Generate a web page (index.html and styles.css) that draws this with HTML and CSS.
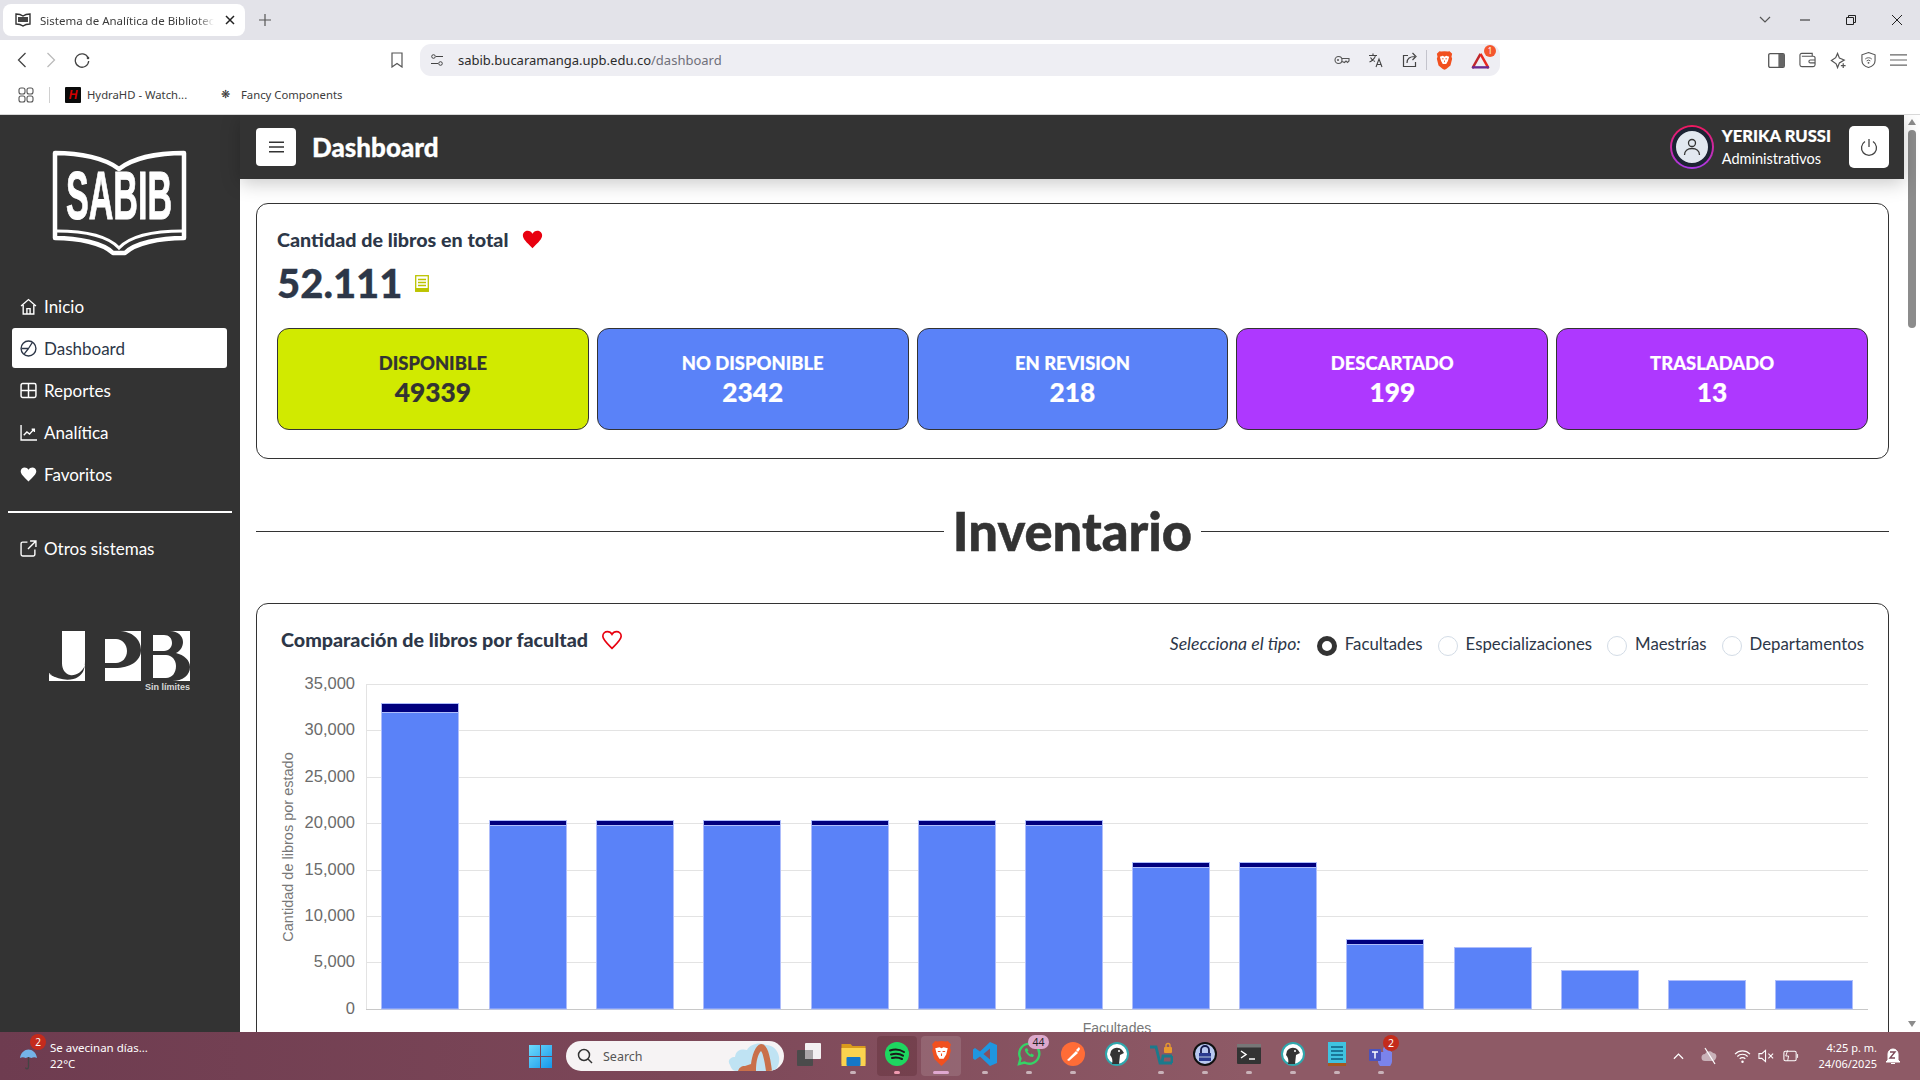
FILE: index.html
```html
<!DOCTYPE html>
<html lang="es">
<head>
  <meta charset="UTF-8" />
  <meta name="viewport" content="width=device-width, initial-scale=1.0" />
  <title>Sistema de Analítica de Bibliotecas</title>
  <link rel="stylesheet" href="styles.css">
</head>
<body>
  <svg class="defs" width="0" height="0">
    <symbol id="bear" viewBox="0 0 24 24">
      <circle cx="12" cy="12" r="11" fill="#fff" stroke="#2fa7ad" stroke-width="2"/>
      <path d="M6 9c3-4 8-4 11-1l2 3-4 2-1 9H7c1-4 0-7-2-9z" fill="#333"/>
      <circle cx="14" cy="9" r="1" fill="#fff"/>
    </symbol>
    <symbol id="heart" viewBox="0 0 24 24">
      <path d="M12 22C5 15 1 11.500 1 7.500 1 4 3.700 2 6.500 2 8.800 2 10.800 3.200 12 5.300 13.200 3.200 15.200 2 17.500 2 20.300 2 23 4 23 7.500 23 11.500 19 15 12 22z"/>
    </symbol>
  </svg>

  <!-- barra del navegador -->
  <div class="tabstrip">
    <div class="tab">
      <svg class="tab-icon" viewBox="0 0 16 14" width="16" height="14"><path d="M1 1c3 0 5 .5 7 2 2-1.500 4-2 7-2v10c-3 0-5 .5-7 2-2-1.500-4-2-7-2z" fill="#fff" stroke="#333" stroke-width="1.400"/><rect x="3" y="4" width="10" height="5" fill="#444"/></svg>
      <span class="tab-title">Sistema de Analítica de Bibliotecas</span>
      <svg class="tab-close" viewBox="0 0 10 10" width="10" height="10"><path d="M1 1l8 8M9 1l-8 8" stroke="#222" stroke-width="1.500"/></svg>
    </div>
    <svg class="tab-new" viewBox="0 0 12 12" width="12" height="12"><path d="M6 0v12M0 6h12" stroke="#555" stroke-width="1.200"/></svg>
    <div class="win-controls">
      <svg class="win-chevron" viewBox="0 0 12 8" width="12" height="8"><path d="M1 1l5 5 5-5" fill="none" stroke="#555" stroke-width="1.200"/></svg>
      <svg viewBox="0 0 12 2" width="12" height="2"><path d="M1 1h10" stroke="#222"/></svg>
      <svg viewBox="0 0 12 12" width="12" height="12"><path d="M1.500 3.500h7v7h-7zM3.500 3.500v-2h7v7h-2" fill="none" stroke="#222"/></svg>
      <svg viewBox="0 0 12 12" width="12" height="12"><path d="M1 1l10 10M11 1L1 11" stroke="#222"/></svg>
    </div>
  </div>

  <div class="toolbar">
    <svg class="tb-back" viewBox="0 0 10 16" width="10" height="16"><path d="M8.500 1L1.500 8l7 7" fill="none" stroke="#444" stroke-width="1.300"/></svg>
    <svg class="tb-forward" viewBox="0 0 10 16" width="10" height="16"><path d="M1.500 1l7 7-7 7" fill="none" stroke="#bbb" stroke-width="1.300"/></svg>
    <svg class="tb-reload" viewBox="0 0 16 16" width="16" height="16"><path d="M14 5.500A6.700 6.700 0 1 0 14.700 9" fill="none" stroke="#444" stroke-width="1.300"/><circle cx="14" cy="6" r="1.300" fill="#444"/></svg>
    <svg class="tb-bookmark" viewBox="0 0 12 16" width="12" height="16"><path d="M1 1h10v14l-5-3.500L1 15z" fill="none" stroke="#555" stroke-width="1.200"/></svg>
    <div class="address">
      <svg class="addr-tune" viewBox="0 0 14 12" width="14" height="12"><g fill="none" stroke="#444"><circle cx="3.500" cy="2.500" r="1.800"/><path d="M6 2.500h7M1 9.500h7"/><circle cx="10.500" cy="9.500" r="1.800"/></g></svg>
      <span class="addr-url">sabib.bucaramanga.upb.edu.co<span class="addr-path">/dashboard</span></span>
      <div class="addr-icons">
        <svg viewBox="0 0 16 10" width="16" height="10"><g fill="none" stroke="#555" stroke-width="1.100"><circle cx="4.500" cy="5" r="3.500"/><path d="M8 3.500h7v2.500l-1.500 1.500-1.500-1.500-1.500 1.500L8 6.500"/></g><circle cx="4" cy="5" r="1" fill="#555"/></svg>
        <svg viewBox="0 0 16 16" width="16" height="16"><g fill="none" stroke="#444" stroke-width="1.100"><path d="M1 3.500h8M5 1.500v2M7.500 3.500C7 6 4 9 1.500 10M2.500 5.500C3.500 7.500 5.500 9 7 9.500M8 15l3-8 3 8M9.100 12.500h3.800"/></g></svg>
        <svg viewBox="0 0 16 16" width="16" height="16"><g fill="none" stroke="#444" stroke-width="1.200"><path d="M6 3.500H1.500v11h12V10M5 11C5 6.500 8 4.500 13 4.500M10.500 1l3.500 3.500L10.500 8"/></g></svg>
        <span class="addr-sep"></span>
        <svg class="addr-brave" viewBox="0 0 20 24" width="17" height="21"><path d="M10 1l4 .5 2-.5 3 3-.8 3.500.8 2.500-2 8-5 4-2 1-2-1-5-4-2-8 .8-2.500L1 4l3-3 2 .5z" fill="#f1501f"/><path d="M4.500 7.500L8 6.500l2 1 2-1 3.500 1-1.500 5-2 3.500h-4l-2-3.500z" fill="#fff"/><path d="M7 10h2M11 10h2M10 12v2" stroke="#f1501f"/></svg>
        <span class="addr-rewards">
          <svg viewBox="0 0 20 18" width="19" height="17"><path d="M10 2l-8.500 15" stroke="#c0262a" stroke-width="2.600"/><path d="M10 2l8.500 15" stroke="#e8281f" stroke-width="2.600"/><path d="M1 15h18v2.500H1z" fill="#6a2b92"/></svg>
          <span class="addr-badge">1</span>
        </span>
      </div>
    </div>
    <div class="tb-right">
      <svg viewBox="0 0 18 16" width="17" height="15"><rect x=".7" y=".7" width="16.600" height="14.600" rx="1.500" fill="none" stroke="#555" stroke-width="1.400"/><rect x="11" y="1" width="6" height="14" fill="#666"/></svg>
      <svg viewBox="0 0 18 16" width="17" height="16"><path d="M3 1h11v3M1 3a2 2 0 0 1 2-2M1 3v10a2 2 0 0 0 2 2h12a2 2 0 0 0 2-2V6a2 2 0 0 0-2-2H3" fill="none" stroke="#555" stroke-width="1.200"/><path d="M17 8h-5a1.500 1.500 0 0 0 0 3h5" fill="none" stroke="#555" stroke-width="1.200"/></svg>
      <svg viewBox="0 0 18 18" width="17" height="17"><path d="M8 1.500l2 5 5 2-5 3-2 5-1.500-4L1.500 9l4.500-3z" fill="none" stroke="#555" stroke-width="1.300"/><path d="M14 12v5M11.500 14.500h5" stroke="#555" stroke-width="1.300"/></svg>
      <svg viewBox="0 0 16 18" width="15" height="18"><path d="M8 1l7 2.500v6c0 4-3.500 6.500-7 7.500-3.500-1-7-3.500-7-7.500v-6z" fill="none" stroke="#555" stroke-width="1.200"/><path d="M4.500 8a5 5 0 0 1 7 0M6 10a3 3 0 0 1 4 0" fill="none" stroke="#555"/><circle cx="8" cy="12" r="1" fill="#555"/></svg>
      <svg viewBox="0 0 18 14" width="17" height="14"><path d="M0 1.500h18M0 7h18M0 12.500h18" stroke="#666" stroke-width="1.300"/></svg>
    </div>
  </div>

  <div class="bookmarks">
    <svg class="bm-apps" viewBox="0 0 16 16" width="16" height="16"><g fill="none" stroke="#555" stroke-width="1.100"><rect x="1" y="1" width="6" height="6" rx="2"/><rect x="9" y="1" width="6" height="6" rx="2"/><rect x="1" y="9" width="6" height="6" rx="2"/><rect x="9" y="9" width="6" height="6" rx="2"/></g></svg>
    <span class="bm-sep"></span>
    <span class="bm-hydra">H</span>
    <span class="bm-text bm-first">HydraHD - Watch...</span>
    <span class="bm-flower">❋</span>
    <span class="bm-text">Fancy Components</span>
  </div>

  <!-- aplicacion -->
  <div class="app">
    <aside class="sidebar">
      <div class="logo">
        <svg viewBox="50 148 140 112" width="140" height="112">
          <path d="M55 153C80 153 105 158 119 169 133 158 158 153 184 153V238C160 238 135 243 125 253H113C103 243 78 238 55 238Z" fill="none" stroke="#fff" stroke-width="4.500" stroke-linejoin="round"/>
          <path d="M56 231C85 231 108 236 119 248 130 236 153 231 183 231" fill="none" stroke="#fff" stroke-width="3"/>
          <text class="logo-text" x="119" y="219" text-anchor="middle" textLength="106" lengthAdjust="spacingAndGlyphs">SABIB</text>
        </svg>
      </div>
      <nav class="nav">
        <a class="nav-item">
          <svg viewBox="0 0 16 16" width="17" height="17"><path d="M1 7.500L8 1.500l7 6M3 6.500V15h10V6.500M6.500 15v-5h3v5" fill="none" stroke="currentColor" stroke-width="1.300"/></svg>
          Inicio
        </a>
        <a class="nav-item active">
          <svg viewBox="0 0 16 16" width="17" height="17"><circle cx="8" cy="8" r="7" fill="none" stroke="currentColor" stroke-width="1.300"/><path d="M8 8l3.500-5.500M8 8H1.500M8 8l-4 5" fill="none" stroke="currentColor" stroke-width="1.200"/></svg>
          Dashboard
        </a>
        <a class="nav-item">
          <svg viewBox="0 0 16 16" width="17" height="17"><rect x="1" y="1.500" width="14" height="13" rx="1.500" fill="none" stroke="currentColor" stroke-width="1.400"/><path d="M1 8h14M8 1.500v13" stroke="currentColor" stroke-width="1.400"/></svg>
          Reportes
        </a>
        <a class="nav-item">
          <svg viewBox="0 0 16 16" width="17" height="17"><path d="M1 1v14h15" fill="none" stroke="currentColor" stroke-width="1.300"/><path d="M3.500 10.500l3-3 2.500 2 4-4.500M11 5h2.500v2.500" fill="none" stroke="currentColor" stroke-width="1.300"/></svg>
          Analítica
        </a>
        <a class="nav-item">
          <svg viewBox="0 0 24 24" width="17" height="17" fill="currentColor"><use href="#heart"/></svg>
          Favoritos
        </a>
      </nav>
      <div class="side-line"></div>
      <a class="nav-item other">
        <svg viewBox="0 0 16 16" width="17" height="17"><path d="M7 2H2.500A1.500 1.500 0 0 0 1 3.500v10A1.500 1.500 0 0 0 2.500 15h10a1.500 1.500 0 0 0 1.500-1.500V9M9.500 1H15v5.500M15 1L7.500 8.500" fill="none" stroke="currentColor" stroke-width="1.300"/></svg>
        Otros sistemas
      </a>
      <div class="upb">
        <svg viewBox="49 630 141 60" width="141" height="60">
          <path d="M62 630H85V680H49V672C56 678 62 678 62 664Z" fill="#fff"/>
          <path d="M49 673C60 680 72 680 78 676 83 673 85 668 85 660V664C82 672 75 675 70 674 65 673 62 668 62 662 62 670 56 676 49 673Z" fill="#333"/>
          <rect x="105" y="630" width="36" height="50" fill="#fff"/>
          <path d="M105 630H118C132 630 141 638 141 649 141 660 130 667 115 667H105ZM105 638V662H116C122 662 127 657 127 650 127 643 122 638 116 638Z" fill="#333" fill-rule="evenodd"/>
          <rect x="153" y="630" width="37" height="50" fill="#fff"/>
          <path d="M153 630H170C178 630 183 635 183 641 183 646 180 650 176 652 184 654 190 659 190 666 190 674 183 680 172 680H153ZM153 634V650H164C169 650 172 646 172 642 172 637 169 634 164 634ZM153 654V677H166C172 677 176 672 176 665 176 659 172 654 166 654Z" fill="#333" fill-rule="evenodd"/>
          <text class="upb-text" x="190" y="689" text-anchor="end">Sin límites</text>
        </svg>
      </div>
    </aside>

    <main class="main">
      <header class="topbar">
        <div class="menu-btn">
          <svg viewBox="0 0 16 12" width="15" height="12"><path d="M0 1h16M0 6h16M0 11h16" stroke="#333" stroke-width="1.600"/></svg>
        </div>
        <h1 class="page-title">Dashboard</h1>
        <div class="user">
          <div class="avatar">
            <div class="avatar-in">
              <svg viewBox="0 0 20 20" width="20" height="20"><circle cx="10" cy="6" r="3.500" fill="none" stroke="#333" stroke-width="1.300"/><path d="M2.500 18c0-4 3-6.500 7.500-6.500s7.500 2.500 7.500 6.500" fill="none" stroke="#333" stroke-width="1.300"/></svg>
            </div>
          </div>
          <div class="user-text">
            <div class="user-name">YERIKA RUSSI</div>
            <div class="user-role">Administrativos</div>
          </div>
        </div>
        <div class="power-btn">
          <svg viewBox="0 0 18 18" width="18" height="18"><path d="M5 3.500a7.500 7.500 0 1 0 8 0M9 1v8" fill="none" stroke="#444" stroke-width="1.300"/></svg>
        </div>
      </header>

      <div class="content">
        <section class="card totals">
          <div class="card-head">
            <h2 class="card-title">Cantidad de libros en total</h2>
            <svg class="heart-full" viewBox="0 0 24 24" width="21" height="21"><use href="#heart"/></svg>
          </div>
          <div class="total-line">
            <span class="total-num">52.111</span>
            <svg viewBox="0 0 14 17" width="14" height="17"><g fill="none" stroke="#bcc400" stroke-width="1.300"><rect x=".7" y=".7" width="12.600" height="15.600"/><path d="M3 4.500h8M3 7.500h8M3 10.500h8"/></g><rect x=".7" y="13" width="12.600" height="3.300" fill="#bcc400"/></svg>
          </div>
          <div class="states">
            <div class="state lime"><span class="state-name">DISPONIBLE</span><span class="state-num">49339</span></div>
            <div class="state blue"><span class="state-name">NO DISPONIBLE</span><span class="state-num">2342</span></div>
            <div class="state blue"><span class="state-name">EN REVISION</span><span class="state-num">218</span></div>
            <div class="state purple"><span class="state-name">DESCARTADO</span><span class="state-num">199</span></div>
            <div class="state purple"><span class="state-name">TRASLADADO</span><span class="state-num">13</span></div>
          </div>
        </section>

        <div class="section-title"><span>Inventario</span></div>

        <section class="card chart-card">
          <div class="chart-head">
            <div class="card-head">
              <h2 class="card-title">Comparación de libros por facultad</h2>
              <svg class="heart-line" viewBox="0 0 24 24" width="20" height="20"><use href="#heart"/></svg>
            </div>
            <form class="type-form">
              <em class="type-label">Selecciona el tipo:</em>
              <label class="radio"><input type="radio" name="tipo" checked>Facultades</label>
              <label class="radio"><input type="radio" name="tipo">Especializaciones</label>
              <label class="radio"><input type="radio" name="tipo">Maestrías</label>
              <label class="radio"><input type="radio" name="tipo">Departamentos</label>
            </form>
          </div>
          <svg class="chart" viewBox="277 670 1591 380" width="1591" height="380">
            <g class="grid">
              <path d="M367 684.500H1868M367 730.500H1868M367 777.500H1868M367 823.500H1868M367 870.500H1868M367 916.500H1868M367 962.500H1868"/>
              <path d="M366.500 684V1009"/>
            </g>
            <path class="axis" d="M366 1009.500H1868"/>
            <g class="ticks">
              <text x="355" y="689">35,000</text>
              <text x="355" y="735">30,000</text>
              <text x="355" y="782">25,000</text>
              <text x="355" y="828">20,000</text>
              <text x="355" y="875">15,000</text>
              <text x="355" y="921">10,000</text>
              <text x="355" y="967">5,000</text>
              <text x="355" y="1014">0</text>
            </g>
            <text class="axis-label tall" transform="translate(293 847) rotate(-90)">Cantidad de libros por estado</text>
            <text class="axis-label" x="1117" y="1033">Facultades</text>
            <g class="bars">
              <rect x="381.500" y="712.500" width="77" height="296.500"/>
              <rect x="489.500" y="825.500" width="77" height="183.500"/>
              <rect x="596.500" y="825.500" width="77" height="183.500"/>
              <rect x="703.500" y="825.500" width="77" height="183.500"/>
              <rect x="811.500" y="825.500" width="77" height="183.500"/>
              <rect x="918.500" y="825.500" width="77" height="183.500"/>
              <rect x="1025.500" y="825.500" width="77" height="183.500"/>
              <rect x="1132.500" y="867.500" width="77" height="141.500"/>
              <rect x="1239.500" y="867.500" width="77" height="141.500"/>
              <rect x="1346.500" y="944.500" width="77" height="64.500"/>
              <rect x="1454.500" y="947.500" width="77" height="61.500"/>
              <rect x="1561.500" y="970.500" width="77" height="38.500"/>
              <rect x="1668.500" y="980.500" width="77" height="28.500"/>
              <rect x="1775.500" y="980.500" width="77" height="28.500"/>
            </g>
            <g class="bars-top">
              <rect x="381.500" y="703.500" width="77" height="9"/>
              <rect x="489.500" y="820.500" width="77" height="5"/>
              <rect x="596.500" y="820.500" width="77" height="5"/>
              <rect x="703.500" y="820.500" width="77" height="5"/>
              <rect x="811.500" y="820.500" width="77" height="5"/>
              <rect x="918.500" y="820.500" width="77" height="5"/>
              <rect x="1025.500" y="820.500" width="77" height="5"/>
              <rect x="1132.500" y="862.500" width="77" height="5"/>
              <rect x="1239.500" y="862.500" width="77" height="5"/>
              <rect x="1346.500" y="939.500" width="77" height="5"/>
            </g>
          </svg>
        </section>
      </div>
    </main>

    <div class="scrollbar">
      <span class="arrow-up"></span>
      <span class="thumb"></span>
      <span class="arrow-down"></span>
    </div>
  </div>

  <!-- barra de tareas -->
  <footer class="taskbar">
    <div class="weather">
      <span class="weather-icon">
        <svg viewBox="0 0 20 26" width="19" height="26"><path d="M1 12C2 6 6 3 10 3s8 3 9 9c-2-1-4-1-6 0-2-1-4-1-6 0-2-1-4-1-6 0z" fill="#74b4e8"/><path d="M10 11v10c0 3-3 3-3 1" fill="none" stroke="#444" stroke-width="1.400"/></svg>
        <span class="weather-badge">2</span>
      </span>
      <div class="weather-text">
        <div>Se avecinan días...</div>
        <div>22°C</div>
      </div>
    </div>
    <svg class="win-logo" viewBox="0 0 23 23" width="23" height="23">
      <defs><linearGradient id="winb" x1="0" y1="0" x2="1" y2="1"><stop offset="0" stop-color="#6fdcfc"/><stop offset="1" stop-color="#1596ea"/></linearGradient></defs>
      <path d="M0 0h11v11H0zM12 0h11v11H12zM0 12h11v11H0zM12 12h11v11H12z" fill="url(#winb)"/>
    </svg>
    <div class="search">
      <svg viewBox="0 0 16 16" width="16" height="16"><circle cx="7" cy="7" r="5.500" fill="none" stroke="#333" stroke-width="1.500"/><path d="M11 11l4 4" stroke="#333" stroke-width="1.500"/></svg>
      <span class="search-text">Search</span>
      <svg class="search-art" viewBox="0 0 52 30" width="52" height="30"><path d="M2 24c-3-4 0-8 5-8 1-8 8-8 12-7 3-6 13-8 19-5 7 0 12 5 13 12 1 6-2 13-6 14H8c-3 0-5-3-6-6z" fill="#bfe3f3"/><path d="M10 30c1-3 3-5 7-5l6-2c1-8 4-19 10-20 6 0 9 10 11 27h-6c-1-8-3-18-5-20-3 3-5 10-5 20z" fill="#c9704a"/></svg>
    </div>
    <div class="task-icons">
      <div class="task">
        <svg viewBox="0 0 24 24" width="24" height="24"><rect x="8" y="1" width="16" height="16" rx="1" fill="#f3f0f1"/><rect x="0" y="8" width="16" height="16" rx="1" fill="#4b4b4b"/><rect x="8" y="8" width="8" height="9" fill="#a9a5a7"/></svg>
      </div>
      <div class="task dot">
        <svg viewBox="0 0 24 24" width="25" height="24"><path d="M0 2h9l2 2h13v18H0z" fill="#d99a1c"/><path d="M0 6h24v18H0z" fill="#fbd34f"/><rect x="5" y="15" width="14" height="9" rx="1" fill="#1577c8"/></svg>
      </div>
      <div class="task dot pink box">
        <svg viewBox="0 0 24 24" width="24" height="24"><circle cx="12" cy="12" r="12" fill="#1ed760"/><path d="M5 8.500c5-1.500 10-1 14 1.500M6 12.500c4-1 9-.7 12 1.200M7 16c3-.8 7-.5 10 1" fill="none" stroke="#1a1a1a" stroke-width="2" stroke-linecap="round"/></svg>
      </div>
      <div class="task dot wide box light">
        <svg viewBox="0 0 20 24" width="21" height="25"><path d="M10 0l4 .5 2-.5 3 3-.8 3.500.8 2.500-2 8-5 5-2 2-2-2-5-5-2-8 .8-2.500L1 3l3-3 2 .5z" fill="#f1501f"/><path d="M4 7l4-1 2 1 2-1 4 1-1.500 6-2.500 4h-4l-2.500-4z" fill="#fff"/><path d="M6.500 10H9M11 10h2.500M10 12v2.500" stroke="#f1501f"/></svg>
      </div>
      <div class="task dot">
        <svg viewBox="0 0 24 24" width="24" height="24"><path d="M17 0l7 3v18l-7 3-10-9.500L2 18l-2-1.500V7.500L2 6l5 3.500zM17 6.500L10.500 12l6.500 5.500z" fill="#1f96e0"/></svg>
      </div>
      <div class="task dot">
        <span class="task-wrap">
          <svg viewBox="0 0 24 24" width="24" height="24"><path d="M2 22l1.500-5.500A10 10 0 1 1 7.500 20.500z" fill="none" stroke="#35d366" stroke-width="2.400"/><path d="M8 7c-1 3 5 9 8 8l1-2-2.500-1.500-1 1c-1-.5-2.500-2-3-3l1-1L10 6z" fill="#35d366"/></svg>
          <span class="task-badge pale">44</span>
        </span>
      </div>
      <div class="task dot">
        <svg viewBox="0 0 24 24" width="24" height="24"><circle cx="12" cy="12" r="12" fill="#ff6c37"/><path d="M6 18l9-9 2 2-9 8zM15 8l3-3 1 2-2 3z" fill="#fff"/></svg>
      </div>
      <div class="task">
        <svg width="24" height="24"><use href="#bear"/></svg>
      </div>
      <div class="task dot">
        <svg viewBox="0 0 24 24" width="24" height="24"><path d="M1 5h6l4 16h2l1-7h9M14 21h9" fill="none" stroke="#1b7a8c" stroke-width="2.800"/><path d="M23 14v7" stroke="#1b7a8c" stroke-width="2.800"/><rect x="15" y="5" width="8" height="6" rx="1" fill="#e8992f"/><path d="M17 5V3.500a2 2 0 0 1 4 0V5" fill="none" stroke="#e8992f" stroke-width="1.400"/></svg>
      </div>
      <div class="task dot">
        <svg viewBox="0 0 24 24" width="24" height="24"><circle cx="12" cy="12" r="11" fill="#b8c8f0" stroke="#111" stroke-width="2"/><path d="M8 11V8a4 4 0 0 1 8 0v3" fill="none" stroke="#15194a" stroke-width="1.800"/><rect x="6" y="11" width="12" height="8" fill="#2a3a90"/><path d="M6 15h12" stroke="#bcd"/></svg>
      </div>
      <div class="task dot">
        <svg viewBox="0 0 24 20" width="24" height="20"><rect width="24" height="20" rx="1" fill="#333"/><rect width="24" height="3.500" fill="#777"/><path d="M4 7l5 3.500-5 3.500" fill="none" stroke="#fff" stroke-width="1.500"/><path d="M12 15h6" stroke="#fff" stroke-width="1.500"/></svg>
      </div>
      <div class="task dot">
        <svg width="24" height="24"><use href="#bear"/></svg>
      </div>
      <div class="task dot">
        <svg viewBox="0 0 18 24" width="18" height="24"><rect width="18" height="22" fill="#3fc3e0"/><path d="M3 5h12M3 9h12M3 13h12M3 17h12" stroke="#0f5f80" stroke-width="1.500"/><rect y="21" width="18" height="3" fill="#a4571f"/></svg>
      </div>
      <div class="task dot">
        <span class="task-wrap">
          <svg viewBox="0 0 24 24" width="24" height="24"><circle cx="18" cy="8" r="4" fill="#7b83eb"/><path d="M9 10h14v8a5 5 0 0 1-14 2z" fill="#7b83eb"/><rect x="0" y="7" width="12" height="12" rx="1" fill="#4b53bc"/><path d="M3 10h6M6 10v6.500" stroke="#fff" stroke-width="1.500"/></svg>
          <span class="task-badge red">2</span>
        </span>
      </div>
    </div>
    <div class="tray">
      <svg viewBox="0 0 12 8" width="11" height="8"><path d="M1 7l5-5 5 5" fill="none" stroke="#fff" stroke-width="1.400"/></svg>
      <svg class="tray-cloud" viewBox="0 0 18 18" width="18" height="18"><path d="M4 14a3.500 3.500 0 0 1 0-7c1-3 6-4 8-1 3 0 4 3 3 5-.5 2-2 3-3.500 3z" fill="#c9b2b9"/><path d="M4 1l10 16" stroke="#fff" stroke-width="1.200"/></svg>
      <svg class="tray-wifi" viewBox="0 0 18 16" width="17" height="15"><g fill="none" stroke="#fff" stroke-width="1.200"><path d="M1 5.500a11 11 0 0 1 16 0M3.500 8a7.500 7.500 0 0 1 11 0M6 10.500a4 4 0 0 1 6 0"/></g><circle cx="9" cy="13.500" r="1.300" fill="#fff"/></svg>
      <svg viewBox="0 0 18 14" width="17" height="14"><path d="M1 4.500h3L8 1v12L4 9.500H1z" fill="none" stroke="#fff" stroke-width="1.100"/><path d="M11 4.500l5 5M16 4.500l-5 5" stroke="#fff" stroke-width="1.100"/></svg>
      <svg viewBox="0 0 18 14" width="17" height="14"><rect x="2" y="2" width="13" height="10" rx="1.500" fill="none" stroke="#fff" stroke-width="1.100"/><path d="M16.500 5v4" stroke="#fff"/><path d="M6 1L4 7h3l-1 5" fill="none" stroke="#fff"/></svg>
    </div>
    <div class="clock">
      <div>4:25 p. m.</div>
      <div>24/06/2025</div>
    </div>
    <svg class="bell" viewBox="0 0 16 18" width="16" height="18"><path d="M3 13V7a5 5 0 0 1 10 0v6l2 2H1zM6 16.500h4" fill="#fff" stroke="#fff"/><path d="M5 5h5L5 11h5" fill="none" stroke="#7d4a58" stroke-width="1.400"/></svg>
  </footer>
</body>
</html>
```

FILE: styles.css
```css
* {
  box-sizing: border-box;
}
html, body {
  margin: 0;
  height: 100%;
}
body {
  width: 1920px;
  height: 1080px;
  display: flex;
  flex-direction: column;
  overflow: hidden;
  font-family: "Lato", sans-serif;
  color: #2d3748;
  background: #fff;
}
.defs {
  position: absolute;
}

/* navegador */
.tabstrip {
  height: 40px;
  flex: none;
  display: flex;
  align-items: center;
  background: #e3e3e9;
  padding-left: 3px;
}
.tab {
  width: 242px;
  height: 32px;
  display: flex;
  align-items: center;
  padding: 0 10px 0 12px;
  background: #fff;
  border-radius: 8px;
}
.tab-title {
  width: 174px;
  margin-left: 9px;
  font: 11.500px "Noto Sans", sans-serif;
  color: #3c3c3c;
  white-space: nowrap;
  overflow: hidden;
  -webkit-mask-image: linear-gradient(to right, #000 90%, transparent);
  mask-image: linear-gradient(to right, #000 90%, transparent);
}
.tab-close {
  margin-left: 11px;
}
.tab-new {
  margin-left: 14px;
}
.win-controls {
  margin-left: auto;
  display: flex;
  align-items: center;
  gap: 34px;
  padding-right: 17px;
}
.win-chevron {
  margin-right: -6px;
}
.toolbar {
  height: 40px;
  flex: none;
  display: flex;
  align-items: center;
  background: #fff;
  padding-left: 17px;
}
.tb-forward {
  margin-left: 19px;
}
.tb-reload {
  margin-left: 18px;
}
.tb-bookmark {
  margin-left: 301px;
}
.address {
  width: 1080px;
  height: 32px;
  margin-left: 17px;
  display: flex;
  align-items: center;
  padding-left: 10px;
  background: #eeeef3;
  border-radius: 11px;
}
.addr-url {
  margin-left: 14px;
  font: 13px "Noto Sans", sans-serif;
  color: #2b2b2b;
}
.addr-path {
  color: #70707a;
}
.addr-icons {
  margin-left: auto;
  display: flex;
  align-items: center;
  gap: 18px;
  padding-right: 10px;
}
.addr-sep {
  width: 1px;
  height: 20px;
  background: #c4c4cc;
  margin: 0 -9px 0 -10px;
}
.addr-rewards {
  position: relative;
  display: flex;
}
.addr-badge {
  position: absolute;
  top: -7px;
  right: -6px;
  width: 12px;
  height: 12px;
  border-radius: 50%;
  background: #f4572e;
  color: #fff;
  font: 8px/12px "Noto Sans", sans-serif;
  text-align: center;
}
.tb-right {
  margin-left: auto;
  display: flex;
  align-items: center;
  gap: 14px;
  padding-right: 13px;
}
.bookmarks {
  height: 35px;
  flex: none;
  display: flex;
  align-items: center;
  padding: 0 0 5px 18px;
  background: #fff;
  border-bottom: 1px solid #d8d8d8;
}
.bm-sep {
  width: 1px;
  height: 16px;
  margin-left: 15px;
  background: #d0d0d0;
}
.bm-hydra {
  width: 16px;
  height: 16px;
  margin-left: 15px;
  background: #0a0a0a;
  color: #d40000;
  font: italic bold 12px/16px "Liberation Sans", sans-serif;
  text-align: center;
  border-radius: 1px;
}
.bm-text {
  margin-left: 6px;
  font: 11.300px "Noto Sans", sans-serif;
  color: #3c3c3c;
  white-space: nowrap;
}
.bm-first {
  width: 134px;
}
.bm-flower {
  width: 14px;
  font: 11px "DejaVu Sans", sans-serif;
  color: #333;
}

/* layout */
.app {
  flex: 1;
  display: flex;
  min-height: 0;
  overflow: hidden;
}
.sidebar {
  width: 240px;
  flex: none;
  background: #333;
  color: #fff;
}
.logo {
  height: 171px;
  padding: 33px 0 0 50px;
}
.logo-text {
  font: bold 68px "Liberation Sans Narrow", "Liberation Sans", sans-serif;
  fill: #fff;
  stroke: #fff;
  stroke-width: 1;
}
.nav {
  display: flex;
  flex-direction: column;
  gap: 2px;
  padding: 0 13px 0 12px;
}
.nav-item {
  height: 40px;
  display: flex;
  align-items: center;
  gap: 7px;
  padding-left: 8px;
  font-size: 17px;
  border-radius: 3px;
}
.nav-item.active {
  background: #fff;
  color: #2d3748;
}
.other {
  margin: 15px 12px 0;
  font-size: 17px;
}
.side-line {
  height: 2px;
  margin: 17px 8px 0;
  background: #fff;
}
.upb {
  margin-top: 63px;
  padding-left: 49px;
}
.upb-text {
  font: bold 9px "Liberation Sans", sans-serif;
  fill: #d8d8d8;
}
.main {
  flex: 1;
  min-width: 0;
  display: flex;
  flex-direction: column;
}
.topbar {
  height: 64px;
  flex: none;
  display: flex;
  align-items: center;
  padding: 0 15px 0 16px;
  background: #333;
  color: #fff;
  box-shadow: 0 4px 18px rgba(0, 0, 0, 0.22);
  position: relative;
}
.menu-btn {
  width: 40px;
  height: 38px;
  display: flex;
  align-items: center;
  justify-content: center;
  background: #fff;
  border-radius: 4px;
}
.page-title {
  margin: 0 0 0 16px;
  font-size: 26px;
  font-weight: 900;
  -webkit-text-stroke: 0.3px currentColor;
}
.user {
  margin-left: auto;
  display: flex;
  align-items: center;
  gap: 8px;
}
.avatar {
  width: 44px;
  height: 44px;
  padding: 2px;
  border-radius: 50%;
  background: linear-gradient(#f0185c, #a93ae8);
}
.avatar-in {
  width: 40px;
  height: 40px;
  display: flex;
  align-items: center;
  justify-content: center;
  border-radius: 50%;
  background: #e2e8f0;
  border: 4px solid #1c2333;
}
.user-name {
  font-size: 16.600px;
  font-weight: 900;
  line-height: 24px;
  -webkit-text-stroke: 0.2px currentColor;
}
.user-role {
  font-size: 14.500px;
  line-height: 22px;
}
.power-btn {
  width: 40px;
  height: 42px;
  margin-left: 18px;
  display: flex;
  align-items: center;
  justify-content: center;
  background: #fff;
  border-radius: 5px;
}

/* contenido */
.content {
  padding: 24px 15px 0 16px;
}
.card {
  border: 1px solid #333;
  border-radius: 12px;
  background: #fff;
}
.totals {
  height: 256px;
  padding: 23px 20px 0;
}
.card-head {
  display: flex;
  align-items: center;
  height: 24px;
}
.card-title {
  margin: 0;
  font-size: 19.700px;
  font-weight: 900;
  color: #2d3748;
}
.heart-full {
  margin-left: 14px;
  fill: #e8000f;
}
.heart-line {
  margin-left: 14px;
  fill: none;
  stroke: #e8000f;
  stroke-width: 2;
}
.total-line {
  height: 46px;
  margin-top: 9px;
  display: flex;
  align-items: center;
  gap: 12px;
}
.total-num {
  font-size: 40px;
  font-weight: 900;
  color: #2d3748;
  -webkit-text-stroke: 0.3px currentColor;
}
.states {
  margin-top: 22px;
  display: flex;
  gap: 8px;
}
.state {
  flex: 1;
  height: 102px;
  display: flex;
  flex-direction: column;
  align-items: center;
  justify-content: center;
  gap: 1px;
  border: 1px solid #333;
  border-radius: 12px;
  color: #fff;
  font-weight: 900;
}
.state-name {
  font-size: 18.400px;
  line-height: 24px;
  -webkit-text-stroke: 0.2px currentColor;
}
.state-num {
  font-size: 26.300px;
  line-height: 32px;
  -webkit-text-stroke: 0.2px currentColor;
}
.lime {
  background: #d1ea00;
  color: #333;
}
.blue {
  background: #5a82f8;
}
.purple {
  background: #ae38ff;
}
.section-title {
  height: 60px;
  margin: 42px 0;
  display: flex;
  align-items: center;
  gap: 9px;
  font-size: 52.400px;
  font-weight: 900;
  color: #333;
  -webkit-text-stroke: 0.5px currentColor;
}
.section-title span {
  margin-top: -2px;
}
.section-title::before,
.section-title::after {
  content: "";
  flex: 1;
  height: 1px;
  background: #333;
}
.chart-card {
  padding: 22px 20px 0;
}
.chart-head {
  display: flex;
  justify-content: space-between;
  align-items: center;
  height: 27px;
  margin-bottom: 17px;
  padding-left: 4px;
}
.type-form {
  display: flex;
  align-items: center;
  gap: 15px;
  padding: 8px 4px 0 0;
  font-size: 16.800px;
  color: #2d3748;
}
.type-label {
  margin-right: 1px;
  font-size: 17.700px;
}
.radio {
  display: flex;
  align-items: center;
  gap: 8px;
}
.radio input {
  appearance: none;
  width: 20px;
  height: 20px;
  margin: 4px 0 0;
  border: 1px solid #d3dce6;
  border-radius: 50%;
  background: #fff;
}
.radio input:checked {
  border: 5px solid #333;
}
.chart {
  display: block;
  font-family: "Liberation Sans", sans-serif;
}
.grid path {
  stroke: #e3e3e3;
  fill: none;
}
.axis {
  stroke: #c8c8c8;
  fill: none;
}
.ticks text {
  font-size: 16.500px;
  fill: #6b6b6b;
  text-anchor: end;
}
.axis-label {
  font-size: 14px;
  fill: #777;
  text-anchor: middle;
}
.axis-label.tall {
  font-size: 14.500px;
}
.bars rect {
  fill: #5a82f8;
  stroke: #aebdfb;
}
.bars-top rect {
  fill: #00007e;
  stroke: #aebdfb;
  stroke-width: 1;
}
.scrollbar {
  width: 16px;
  flex: none;
  display: flex;
  flex-direction: column;
  align-items: center;
  background: #fff;
  padding-top: 4px;
}
.arrow-up {
  border: 4.500px solid transparent;
  border-top: 0;
  border-bottom: 6px solid #8c8c8c;
}
.thumb {
  width: 8px;
  height: 198px;
  margin-top: 5px;
  border-radius: 4px;
  background: #8c8c8c;
}
.arrow-down {
  margin-top: auto;
  margin-bottom: 5px;
  border: 4.500px solid transparent;
  border-bottom: 0;
  border-top: 6px solid #8c8c8c;
}

/* barra de tareas */
.taskbar {
  height: 48px;
  flex: none;
  display: flex;
  align-items: center;
  background: linear-gradient(to right, #6e3c50, #7c4758 35%, #8e5a66 65%, #8e5a66);
  color: #fff;
  font: 11.500px "Noto Sans", sans-serif;
}
.weather {
  width: 529px;
  flex: none;
  display: flex;
  align-items: center;
  padding-left: 19px;
  gap: 12px;
}
.weather-icon {
  position: relative;
  display: flex;
  margin-top: 6px;
}
.weather-badge,
.task-badge.red {
  position: absolute;
  background: #c42b1c;
  color: #fff;
  text-align: center;
  border-radius: 50%;
}
.weather-badge {
  top: -12px;
  left: 11px;
  width: 16px;
  height: 16px;
  font-size: 10px;
  line-height: 16px;
}
.weather-text {
  line-height: 16px;
}
.search {
  width: 218px;
  height: 30px;
  margin-left: 14px;
  display: flex;
  align-items: center;
  padding: 0 4px 0 11px;
  background: #f6f3f4;
  border-radius: 15px;
  color: #555;
  font-size: 12.500px;
  overflow: hidden;
}
.search-text {
  margin-left: 10px;
}
.search-art {
  margin-left: auto;
}
.task-icons {
  display: flex;
  margin-left: 3px;
}
.task {
  width: 44px;
  height: 40px;
  position: relative;
  display: flex;
  align-items: center;
  justify-content: center;
  border-radius: 4px;
  padding-bottom: 5px;
}
.task.dot::after {
  content: "";
  position: absolute;
  bottom: 2px;
  left: 50%;
  width: 6px;
  height: 3px;
  margin-left: -3px;
  border-radius: 2px;
  background: #c9b2b9;
}
.task.pink::after {
  background: #f09ab0;
}
.task.wide::after {
  width: 16px;
  margin-left: -8px;
  background: #e0a8d0;
}
.task.box {
  background: rgba(90, 40, 50, 0.35);
  width: 40px;
  margin: 0 2px;
}
.task.box.light {
  background: rgba(255, 255, 255, 0.12);
}
.task-wrap {
  position: relative;
  display: flex;
}
.task-badge {
  position: absolute;
  top: -7px;
  font-size: 10.500px;
}
.task-badge.pale {
  left: 11px;
  width: 21px;
  height: 14px;
  line-height: 14px;
  border-radius: 7px;
  background: #dca8cc;
  color: #222;
  text-align: center;
}
.task-badge.red {
  left: 14px;
  width: 16px;
  height: 16px;
  line-height: 16px;
}
.tray {
  margin-left: auto;
  display: flex;
  align-items: center;
  gap: 7px;
}
.tray-cloud {
  margin-left: 10px;
}
.tray-wifi {
  margin-left: 8px;
}
.clock {
  margin-left: 19px;
  font-size: 11px;
  text-align: right;
  line-height: 16px;
}
.bell {
  margin: 0 19px 0 8px;
}
```
